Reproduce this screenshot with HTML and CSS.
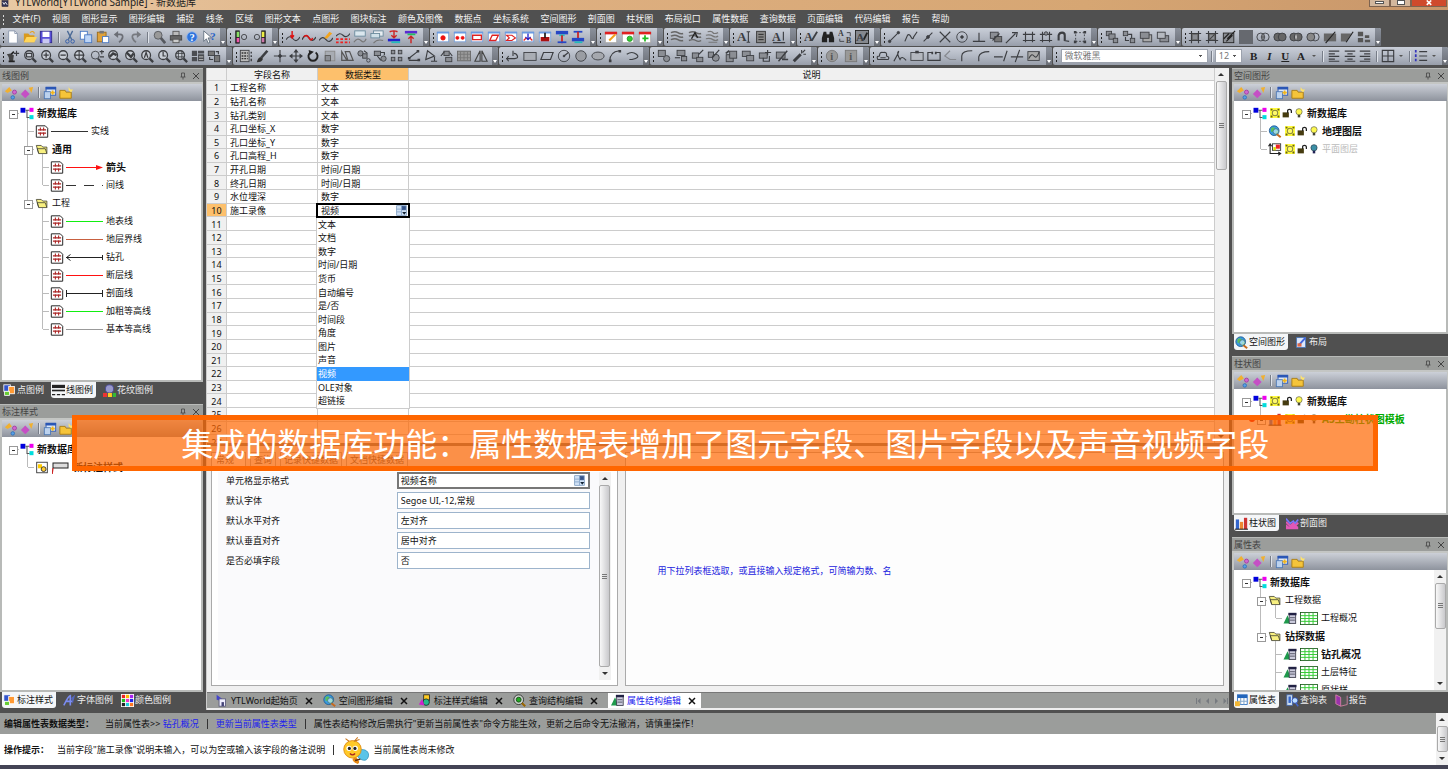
FILE: index.html
```html
<!DOCTYPE html>
<html lang="zh-CN">
<head>
<meta charset="utf-8">
<title>YTLWorld[YTLWorld Sample] - 新数据库</title>
<link rel="stylesheet" href="styles.css">
</head>
<body>
<div class="app">
  <header class="titlebar">
    <span class="app-icon" data-icon="app"></span>
    <h1 class="title">YTLWorld[YTLWorld Sample] - 新数据库</h1>
    <div class="window-buttons">
      <button class="win" aria-label="最小化"><span class="glyph-min"></span></button>
      <button class="win" aria-label="还原"><span class="glyph-max"></span></button>
      <button class="win win-close" aria-label="关闭"><span data-icon="xw"></span></button>
    </div>
  </header>

  <nav class="menubar">
    <span class="grip grip-light"></span>
    <button>文件(F)</button><button>视图</button><button>图形显示</button><button>图形编辑</button><button>捕捉</button><button>线条</button><button>区域</button><button>图形文本</button><button>点图形</button><button>图块标注</button><button>颜色及图像</button><button>数据点</button><button>坐标系统</button><button>空间图形</button><button>剖面图</button><button>柱状图</button><button>布局视口</button><button>属性数据</button><button>查询数据</button><button>页面编辑</button><button>代码编辑</button><button>报告</button><button>帮助</button>
  </nav>

  <div class="toolrow toolrow-a">
    <div class="strip" data-tools="new open save | cut copy paste undo redo | find print help what"></div>
    <div class="strip" data-tools="barL barR"></div>
    <div class="strip" data-tools="crvA crvB crvC crvD layA layB layC layD"></div>
    <div class="strip" data-tools="dot1 dot2 rectR skewR arrR boxDn boxIn colA colB"></div>
    <div class="strip" data-tools="calPen calDot calAdd"></div>
    <div class="strip" data-tools="wavA wavB wavC"></div>
    <div class="strip" data-tools="txtI page txtU"></div>
    <div class="strip" data-tools="txtPen binoc abSwap txtBox"></div>
    <div class="strip" data-tools="segA polyA segB cross target perp stampG wand frame frameX magnet marquee"></div>
    <div class="strip" data-tools="ordA ordB ordC ordD"></div>
    <div class="strip" data-tools="hatA hatB hatPen block venA venB venC venD slashA slashB tiles"></div>
  </div>

  <div class="toolrow toolrow-b">
    <div class="strip" data-tools="pan zoomWin zoomIn zoomOut zoomAll zoomPm zoomPrev zoomBk zoomA zoomL zoomG paneA paneB"></div>
    <div class="strip" data-tools="calc brush plus move rotate scale shear copyD copyS array nodes triA triB gridG mirror"></div>
    <div class="strip" data-tools="hook rectG skewG circR circG ellG arcA arcB"></div>
    <div class="strip" data-tools="ordE ordF ordG ordH cutA cutB cutC cutD wandG"></div>
    <div class="strip" data-tools="infoC infoS"></div>
    <div class="strip" data-tools="cloud scrib rectN rectO angA angB corner trimA trimB img"></div>
    <div class="strip strip-format">
      <span class="grip"></span>
      <select class="combo combo-font" aria-label="字体"><option>微软雅黑</option></select>
      <span class="sep"></span>
      <select class="combo combo-size" aria-label="字号"><option>12</option></select>
      <button class="fmt fmt-b" aria-label="加粗">B</button>
      <button class="fmt fmt-i" aria-label="倾斜">I</button>
      <button class="fmt fmt-u" aria-label="下划线">U</button>
      <button class="fmt fmt-a" aria-label="文字颜色">A</button>
      <span class="caret"></span><span class="sep"></span>
      <button class="tool" data-icon="alL" aria-label="左对齐"></button>
      <button class="tool" data-icon="alC" aria-label="居中"></button>
      <button class="tool" data-icon="alR" aria-label="右对齐"></button>
      <span class="sep"></span>
      <button class="tool" data-icon="tbl" aria-label="边框"></button>
      <span class="caret"></span><span class="sep"></span>
      <button class="tool" data-icon="list" aria-label="列表"></button>
      <span class="caret"></span>
      <span class="endcap"></span>
    </div>
  </div>

  <main class="workspace">
    <aside class="dock dock-left">
      <section class="panel">
        <h2 class="panel-head"><span>线图例</span><span data-icon="pin"></span><button aria-label="关闭" data-icon="x"></button></h2>
        <div class="panel-tools"></div>
        <div class="panel-body">
          <ul class="tree">
            <li><div class="row open"><i data-icon="db"></i><b>新数据库</b></div>
              <ul>
                <li><div class="row"><i data-icon="hash"></i><i class="line" data-line="solid"></i>实线</div></li>
                <li><div class="row open"><i data-icon="folder"></i><b>通用</b></div>
                  <ul>
                    <li><div class="row"><i data-icon="hash"></i><i class="line" data-line="arrow"></i><b>箭头</b></div></li>
                    <li><div class="row"><i data-icon="hash"></i><i class="line" data-line="dash"></i>间线</div></li>
                  </ul></li>
                <li><div class="row open"><i data-icon="folder"></i>工程</div>
                  <ul>
                    <li><div class="row"><i data-icon="hash"></i><i class="line" data-line="green"></i>地表线</div></li>
                    <li><div class="row"><i data-icon="hash"></i><i class="line" data-line="brown"></i>地层界线</div></li>
                    <li><div class="row"><i data-icon="hash"></i><i class="line" data-line="drill"></i>钻孔</div></li>
                    <li><div class="row"><i data-icon="hash"></i><i class="line" data-line="red"></i>断层线</div></li>
                    <li><div class="row"><i data-icon="hash"></i><i class="line" data-line="section"></i>剖面线</div></li>
                    <li><div class="row"><i data-icon="hash"></i><i class="line" data-line="green"></i>加粗等高线</div></li>
                    <li><div class="row"><i data-icon="hash"></i><i class="line" data-line="gray"></i>基本等高线</div></li>
                  </ul></li>
              </ul></li>
          </ul>
        </div>
        <div class="panel-tabs">
          <button><i data-icon="tPoint"></i>点图例</button>
          <button class="on"><i data-icon="tLine"></i>线图例</button>
          <button><i data-icon="tFill"></i>花纹图例</button>
        </div>
      </section>
      <section class="panel">
        <h2 class="panel-head"><span>标注样式</span><span data-icon="pin"></span><button aria-label="关闭" data-icon="x"></button></h2>
        <div class="panel-tools"></div>
        <div class="panel-body">
          <ul class="tree">
            <li><div class="row open"><i data-icon="db"></i><b>新数据库</b></div>
              <ul><li><div class="row"><i data-icon="style"></i><i class="wide" data-icon="callout"></i><b>新标注样式</b></div></li></ul></li>
          </ul>
        </div>
        <div class="panel-tabs">
          <button class="on"><i data-icon="tPoint"></i>标注样式</button>
          <button><i data-icon="tFont"></i>字体图例</button>
          <button><i data-icon="tColor"></i>颜色图例</button>
        </div>
      </section>
    </aside>

    <section class="center">
      <div class="sheet">
        <div class="sheet-view">
          <table class="grid">
            <thead><tr><th class="c-num"></th><th class="c-name">字段名称</th><th class="c-type hot">数据类型</th><th>说明</th></tr></thead>
            <tbody>
              <tr><th>1</th><td>工程名称</td><td>文本</td><td></td></tr>
              <tr><th>2</th><td>钻孔名称</td><td>文本</td><td></td></tr>
              <tr><th>3</th><td>钻孔类别</td><td>文本</td><td></td></tr>
              <tr><th>4</th><td>孔口坐标_X</td><td>数字</td><td></td></tr>
              <tr><th>5</th><td>孔口坐标_Y</td><td>数字</td><td></td></tr>
              <tr><th>6</th><td>孔口高程_H</td><td>数字</td><td></td></tr>
              <tr><th>7</th><td>开孔日期</td><td>时间/日期</td><td></td></tr>
              <tr><th>8</th><td>终孔日期</td><td>时间/日期</td><td></td></tr>
              <tr><th>9</th><td>水位埋深</td><td>数字</td><td></td></tr>
              <tr><th class="hot">10</th><td>施工录像</td><td class="editing">
                <div class="editor"><input value="视频" aria-label="数据类型"><button aria-label="展开" data-icon="pick"></button></div>
                <ul class="options" role="listbox">
                  <li role="option">文本</li><li role="option">文档</li><li role="option">数字</li><li role="option">时间/日期</li><li role="option">货币</li><li role="option">自动编号</li><li role="option">是/否</li><li role="option">时间段</li><li role="option">角度</li><li role="option">图片</li><li role="option">声音</li><li role="option" aria-selected="true" class="sel">视频</li><li role="option">OLE对象</li><li role="option">超链接</li>
                </ul></td><td></td></tr>
              <tr><th>11</th><td></td><td></td><td></td></tr>
              <tr><th>12</th><td></td><td></td><td></td></tr>
              <tr><th>13</th><td></td><td></td><td></td></tr>
              <tr><th>14</th><td></td><td></td><td></td></tr>
              <tr><th>15</th><td></td><td></td><td></td></tr>
              <tr><th>16</th><td></td><td></td><td></td></tr>
              <tr><th>17</th><td></td><td></td><td></td></tr>
              <tr><th>18</th><td></td><td></td><td></td></tr>
              <tr><th>19</th><td></td><td></td><td></td></tr>
              <tr><th>20</th><td></td><td></td><td></td></tr>
              <tr><th>21</th><td></td><td></td><td></td></tr>
              <tr><th>22</th><td></td><td></td><td></td></tr>
              <tr><th>23</th><td></td><td></td><td></td></tr>
              <tr><th>24</th><td></td><td></td><td></td></tr>
              <tr><th>25</th><td></td><td></td><td></td></tr>
              <tr><th>26</th><td></td><td></td><td></td></tr>
              <tr><th>27</th><td></td><td></td><td></td></tr>
            </tbody>
          </table>
        </div>
        <div class="scroll"><span class="up"></span><span class="thumb thumb-quarter"></span><span class="rest"></span><span class="down"></span></div>
      </div>

      <div class="details">
        <div class="props">
          <div class="prop-tabs"><button class="on">常规</button><button>查询</button><button>记录快捷数据</button><button>文档快捷数据</button></div>
          <div class="prop-page">
            <form class="fields">
              <label for="f1">单元格显示格式</label>
              <span class="pickbox"><select id="f1"><option>视频名称</option></select><span class="pick" data-icon="pick"></span></span>
              <label for="f2">默认字体</label><input id="f2" value="Segoe UI,-12,常规">
              <label for="f3">默认水平对齐</label><input id="f3" value="左对齐">
              <label for="f4">默认垂直对齐</label><input id="f4" value="居中对齐">
              <label for="f5">是否必填字段</label><input id="f5" value="否">
            </form>
            <div class="scroll"><span class="up"></span><span class="thumb thumb-full"></span><span class="down"></span></div>
          </div>
        </div>
        <p class="hint">用下拉列表框选取，或直接输入规定格式，可简输为数、名</p>
      </div>

      <div class="doc-tabs">
        <div class="doc"><i data-icon="home"></i>YTLWorld起始页<button aria-label="关闭" data-icon="xd"></button></div>
        <div class="doc"><i data-icon="globe"></i>空间图形编辑<button aria-label="关闭" data-icon="xd"></button></div>
        <div class="doc"><i data-icon="shapes"></i>标注样式编辑<button aria-label="关闭" data-icon="xd"></button></div>
        <div class="doc"><i data-icon="query"></i>查询结构编辑<button aria-label="关闭" data-icon="xd"></button></div>
        <div class="doc on"><i data-icon="attr"></i>属性结构编辑<button aria-label="关闭" data-icon="xd"></button></div>
        <span class="doc-nav" data-icon="nav"></span>
      </div>
    </section>

    <aside class="dock dock-right">
      <section class="panel">
        <h2 class="panel-head"><span>空间图形</span><span data-icon="pin"></span><button aria-label="关闭" data-icon="x"></button></h2>
        <div class="panel-tools"></div>
        <div class="panel-body">
          <ul class="tree">
            <li><div class="row open"><i data-icon="db"></i><i class="s" data-icon="sun"></i><i class="s" data-icon="lock"></i><i class="s" data-icon="bulb"></i><b>新数据库</b></div>
              <ul>
                <li><div class="row"><i data-icon="globe"></i><i class="s" data-icon="sun"></i><i class="s" data-icon="lock"></i><i class="s" data-icon="bulb"></i><b>地理图层</b></div></li>
                <li><div class="row off"><i data-icon="plane"></i><i class="s" data-icon="sun"></i><i class="s" data-icon="lock"></i><i class="s" data-icon="bulbOff"></i>平面图层</div></li>
              </ul></li>
          </ul>
        </div>
        <div class="panel-tabs">
          <button class="on"><i data-icon="globe"></i>空间图形</button>
          <button><i data-icon="tLayout"></i>布局</button>
        </div>
      </section>
      <section class="panel">
        <h2 class="panel-head"><span>柱状图</span><span data-icon="pin"></span><button aria-label="关闭" data-icon="x"></button></h2>
        <div class="panel-tools"></div>
        <div class="panel-body">
          <ul class="tree">
            <li><div class="row open"><i data-icon="db"></i><i class="s" data-icon="sun"></i><i class="s" data-icon="lock"></i><i class="s" data-icon="bulb"></i><b>新数据库</b></div>
              <ul><li><div class="row open marked"><i data-icon="tBars"></i><i class="s" data-icon="sun"></i><i class="s" data-icon="lock"></i><i class="s" data-icon="bulb"></i><b>A3工勘柱状图模板</b></div></li></ul></li>
          </ul>
        </div>
        <div class="panel-tabs">
          <button class="on"><i data-icon="tBars"></i>柱状图</button>
          <button><i data-icon="tSect"></i>剖面图</button>
        </div>
      </section>
      <section class="panel">
        <h2 class="panel-head"><span>属性表</span><span data-icon="pin"></span><button aria-label="关闭" data-icon="x"></button></h2>
        <div class="panel-tools"></div>
        <div class="panel-body">
          <ul class="tree">
            <li><div class="row open"><i data-icon="db"></i><b>新数据库</b></div>
              <ul>
                <li><div class="row open"><i data-icon="folder"></i>工程数据</div>
                  <ul><li><div class="row"><i data-icon="attr"></i><i class="wide" data-icon="sheet"></i>工程概况</div></li></ul></li>
                <li><div class="row open"><i data-icon="folder"></i><b>钻探数据</b></div>
                  <ul>
                    <li><div class="row"><i data-icon="attr"></i><i class="wide" data-icon="sheet"></i><b>钻孔概况</b></div></li>
                    <li><div class="row"><i data-icon="attr"></i><i class="wide" data-icon="sheet"></i>土层特征</div></li>
                    <li><div class="row"><i data-icon="attr"></i><i class="wide" data-icon="sheet"></i>原状样</div></li>
                    <li><div class="row"><i data-icon="attr"></i><i class="wide" data-icon="sheet"></i></div></li>
                  </ul></li>
              </ul></li>
          </ul>
          <div class="scroll"><span class="up"></span><span class="thumb thumb-half"></span><span class="rest"></span><span class="down"></span></div>
        </div>
        <div class="panel-tabs">
          <button class="on"><i data-icon="tAttr"></i>属性表</button>
          <button><i data-icon="tQuery"></i>查询表</button>
          <button><i data-icon="tBook"></i>报告</button>
        </div>
      </section>
    </aside>

    <p class="banner">集成的数据库功能：属性数据表增加了图元字段、图片字段以及声音视频字段</p>
  </main>

  <footer class="status">
    <div class="status-lines">
      <p class="status-head"><b>编辑属性表数据类型：</b><span>当前属性表&gt;&gt; <a href="#">钻孔概况</a></span><span class="bar"></span><a href="#">更新当前属性表类型</a><span class="bar"></span><span>属性表结构修改后需执行"更新当前属性表"命令方能生效，更新之后命令无法撤消，请慎重操作！</span></p>
      <p class="status-tip"><b>操作提示：</b><span>当前字段"施工录像"说明未输入，可以为空或输入该字段的备注说明</span><span class="bar"></span><span class="bee" data-icon="bee"></span><span>当前属性表尚未修改</span></p>
    </div>
    <div class="scroll"><span class="up"></span><span class="thumb thumb-full"></span><span class="down"></span></div>
  </footer>
</div>
<script src="app.js"></script>
</body>
</html>
```

FILE: styles.css
```css
* { box-sizing: border-box; }
body { margin: 0; font: 9px/12px "Noto Sans", "Noto Sans CJK SC", sans-serif; color: #111; background: #505050; }
h1, h2, p, ul { margin: 0; padding: 0; font: inherit; }
ul { list-style: none; }
button, input, select { font: inherit; color: inherit; border: 0; padding: 0; margin: 0; background: none; border-radius: 0; appearance: none; min-width: 0; }
svg { display: block; width: 100%; height: 100%; }
b { font-weight: 700; }
a { color: #22e; text-decoration: none; }
.app { height: 100vh; display: flex; flex-direction: column; overflow: hidden; }

.titlebar { height: 10px; flex: none; display: flex; overflow: hidden; background: linear-gradient(90deg, #e8c9a4, #dfb183 30%, #d6a673 75%, #c8966a); }
.app-icon { width: 10px; height: 7px; margin-right: 5px; }
.title { flex: 1; line-height: 4px; font-size: 10px; white-space: nowrap; color: #222; }
.window-buttons { display: flex; height: 7px; margin-right: 1px; }
.win { width: 21px; height: 7px; border: 1px solid #7d6350; border-top: 0; background: #d3b79d; display: flex; justify-content: center; }
.win-close { width: 36px; background: #cf4a2c; }
.win-close span { width: 10px; height: 6px; }
.glyph-min { width: 9px; height: 3px; margin-top: 1px; background: #fff; border: 1px solid #555; }
.glyph-max { width: 8px; height: 5px; border: 1px solid #555; background: #fff; }

.menubar { height: 18px; flex: none; width: 66%; padding: 0 6px 0 2px; display: flex; align-items: center; justify-content: space-between; color: #f4f4f4; white-space: nowrap; }
.grip { width: 3px; height: 11px; flex: none; background: radial-gradient(circle, #222 1px, transparent 1px) 0 0 / 3px 4px; }
.grip-light { margin-right: -4px; background: radial-gradient(circle, #ddd 1px, transparent 1px) 0 0 / 3px 4px; }

.toolrow { display: grid; height: 19px; flex: none; gap: 1px; }
.toolrow-a { grid-template-columns: 227fr 51fr 150fr 167fr 66fr 66fr 66fr 83fr 217fr 83fr 200fr 66fr; }
.toolrow-b { grid-template-columns: 232fr 266fr 150fr 167fr 51fr 182fr 396fr; }
.strip { display: flex; align-items: center; height: 18px; min-width: 0; padding-left: 2px; border-radius: 2px; background: linear-gradient(#c9ced8, #b3b9c4 50%, #989eaa); }
.tool { flex: 1 1 0; height: 16px; display: flex; align-items: center; justify-content: center; }
.tool svg { width: 14px; height: 14px; }
.sep { width: 1px; height: 11px; margin: 0 3px; flex: none; background: #777d88; box-shadow: 1px 0 #dfe3ea; }
.endcap { width: 6px; align-self: stretch; flex: none; margin-left: 3px; border-radius: 0 2px 2px 0; background: linear-gradient(#8b919c, #6a6e76); display: flex; align-items: flex-end; justify-content: center; }
.endcap::after { content: ""; margin-bottom: 2px; border: 2px solid transparent; border-top: 3px solid #fff; border-bottom: 0; }
.combo { height: 14px; border: 1px solid #9ca2ad; padding: 0 3px; color: #777; line-height: 12px; background: linear-gradient(#555, #555) right 5px top 5px / 3px 1px no-repeat, linear-gradient(#555, #555) right 6px top 6px / 1px 1px no-repeat, #fff; }
.combo-font { flex: 141 1 0; margin-left: 3px; }
.combo-size { width: 27px; }
.fmt { flex: 16 1 0; font: 700 11px/14px "Liberation Serif", serif; color: #222; }
.combo-size + .fmt { margin-left: 4px; }
.fmt-i { font-style: italic; }
.fmt-u { text-decoration: underline; }
.strip-format .tool { flex: 16 1 0; }
.caret { border: 2px solid transparent; border-top: 2px solid #555; border-bottom: 0; margin: 0 3px; }

.workspace { position: relative; flex: 1; min-height: 0; padding-top: 2px; display: grid; grid-template-columns: 203px minmax(0, 1fr) 216px; gap: 3px; }
.dock { display: grid; min-height: 0; }
.dock-left { grid-template-rows: minmax(0, 336fr) minmax(0, 306fr); }
.dock-right { grid-template-rows: minmax(0, 288fr) minmax(0, 181fr) minmax(0, 173fr); }
.panel { display: flex; flex-direction: column; min-height: 0; }
.panel-head { height: 14px; flex: none; display: flex; align-items: center; gap: 5px; padding: 0 3px 0 2px; background: #9b9d9b; color: #444; border-top: 1px solid #b9bbb9; }
.panel-head > :first-child { flex: 1; }
.panel-head [data-icon] { width: 8px; height: 8px; }
.panel-tools { height: 19px; flex: none; border: 1px solid #c4c6c4; border-width: 2px 1px 0 2px; display: flex; align-items: center; padding: 0 2px 0 1px; background: linear-gradient(#ccd0d8, #8e939d); }
.panel-tools .tool { flex: none; width: 16px; }
.panel-body { flex: 1; min-height: 0; display: flex; overflow: hidden; background: #fff; border: solid #b8bab8; border-width: 0 2px 2px; padding-top: 3px; }
.tree { flex: 1; }
.dock-right .tree { padding-left: 1px; }
.tree ul { margin-left: 15px; }
.tree li { position: relative; white-space: nowrap; }
.tree ul > li::before { content: ""; position: absolute; left: 10px; top: -4px; bottom: 0; border-left: 1px solid #bbb; }
.tree ul > li:last-child::before { bottom: auto; height: 13px; }
.row { position: relative; height: 18px; display: flex; align-items: center; gap: 3px; padding-left: 18px; }
.row::before { content: ""; position: absolute; left: 11px; top: 9px; width: 6px; border-top: 1px solid #bbb; }
.row.open::after { content: ""; position: absolute; left: 7px; top: 6px; width: 7px; height: 7px; border: 1px solid #999; background: linear-gradient(#333, #333) center / 3px 1px no-repeat, #fff; }
.row b { font-size: 10px; }
.row i { width: 14px; height: 13px; flex: none; }
.row i.s { width: 10px; height: 10px; }
.row i.line { width: 37px; margin-left: -1px; }
.row i.wide { width: 18px; }
.row i.s + i.s { margin-left: -1px; }
.row.off { color: #bbb; }
.marked b { color: #0a0; }
.marked i:first-child::before { content: ""; position: absolute; left: -1px; top: 6px; width: 6px; height: 6px; border-radius: 3px; background: #e00; }
.panel-tabs { height: 22px; flex: none; display: flex; align-items: flex-start; gap: 6px; padding: 0 2px; color: #eee; }
.panel:last-child .panel-tabs { height: 18px; }
.panel-tabs button { display: flex; align-items: center; gap: 1px; height: 16px; padding: 0 1px; white-space: nowrap; }
.panel-tabs i { width: 13px; height: 13px; }
.panel-tabs .on { background: #f4f6f8; color: #111; border-radius: 0 0 3px 3px; padding-right: 3px; }

.center { display: grid; grid-template-rows: minmax(0, 378fr) minmax(0, 246fr) auto; min-height: 0; background: #f0f0f0; border-left: 1px solid #ccc; }
.sheet { min-height: 0; display: flex; border-bottom: 3px solid #777; }
.sheet-view { flex: 1; overflow: hidden; background: #fff; }
.grid { width: 100%; height: 381px; border-collapse: separate; border-spacing: 0; table-layout: fixed; }
.grid th, .grid td { border: 1px solid #ccc; border-width: 0 1px 1px 0; padding: 1px 0 0; font-weight: 400; line-height: 11px; white-space: nowrap; text-align: center; background: #f0f0f0; }
.grid td { text-align: left; padding-left: 3px; background: #fff; }
.grid .c-num { width: 20px; }
.grid .c-name, .grid .c-type { width: 91px; }
.grid .hot { background: #fdc06c; }
.grid .editing { position: relative; padding: 0; }
.editor { position: absolute; left: -2px; right: -2px; top: -1px; height: 15px; border: 2px solid #000; background: #fff; display: flex; align-items: center; }
.editor input { flex: 1; height: 11px; padding-left: 3px; }
.editor button { width: 13px; height: 11px; }
.options { position: absolute; left: -2px; right: -2px; top: 14px; height: 191px; z-index: 1; display: flex; flex-direction: column; background: #fff; border: 1px solid #ccc; border-top: 0; }
.options li { flex: 1; min-height: 0; padding-left: 1px; line-height: 13px; }
.options .sel { background: #3399ff; color: #fff; }

.scroll { width: 12px; flex: none; display: flex; flex-direction: column; align-items: center; background: #f1f1f1; }
.up, .down { width: 100%; height: 13px; flex: none; display: flex; align-items: center; justify-content: center; }
.up::after { content: ""; border: 3px solid transparent; border-bottom: 3px solid #333; border-top: 0; }
.down::after { content: ""; border: 3px solid transparent; border-top: 3px solid #333; border-bottom: 0; }
.thumb { width: 11px; border: 1px solid #aaa; border-radius: 2px; background: repeating-linear-gradient(#777 0 1px, transparent 1px 2px) center / 5px 5px no-repeat, linear-gradient(90deg, #f8f8f8, #c9c9cc); }
.thumb-quarter { flex: 1; }
.thumb-quarter + .rest { flex: 3; }
.thumb-half { flex: 45; }
.thumb-half + .rest { flex: 50; }
.thumb-full { flex: 1; }
.sheet .scroll { margin-right: 2px; }
.panel-body .scroll { margin-top: -3px; }

.details { min-height: 0; display: grid; grid-template-columns: minmax(0, 407fr) minmax(0, 600fr); gap: 7px; padding: 6px 5px 6px 4px; }
.props { display: flex; flex-direction: column; min-height: 0; }
.prop-tabs { display: flex; gap: 4px; height: 14px; color: #555; }
.prop-tabs button { border: 1px solid #aaa; border-bottom: 0; padding: 0 3px; white-space: nowrap; }
.prop-tabs .on { background: #fff; padding: 0 11px 0 4px; }
.prop-page { flex: 1; display: flex; border: 1px solid #aaa; background: #fff; padding: 5px 6px; min-height: 0; }
.fields { flex: 1; display: grid; grid-template-columns: 171fr 193fr; align-content: start; align-items: center; row-gap: 3px; padding: 0 9px 0 8px; background: #fafafc; }
.fields input, .pickbox { height: 17px; border: 1px solid #9db4cc; background: #fff; padding: 0 3px; width: 100%; }
.fields .pickbox { position: relative; border: 2px solid #777; padding: 0 2px; }
.pickbox select { width: 100%; height: 13px; display: block; }
.pick { position: absolute; right: 2px; top: 1px; width: 13px; height: 11px; pointer-events: none; }
.hint { border: 1px solid #aaa; background: #fdfdfd; color: #22d; padding: 112px 32px 0; }

.doc-tabs { display: flex; align-items: center; height: 18px; background: #9b9d9b; border-top: 1px solid #777; border-bottom: 2px solid #eee; padding-left: 8px; }
.doc { display: flex; align-items: center; height: 15px; gap: 3px; padding-right: 8px; white-space: nowrap; }
.doc i { width: 13px; height: 13px; }
.doc button { width: 8px; height: 8px; margin: 0 2px 0 4px; }
.doc.on { background: #fff; color: #22e; padding: 0 3px; }
.doc-nav { width: 34px; height: 8px; margin-left: auto; }

.banner { position: absolute; z-index: 2; left: 5%; right: 70px; top: 349px; height: 56px; border: 5px solid #ff6600; background: rgba(255, 102, 0, .7); color: #fff; font: 32px/44px "KaiTi", "AR PL UKai CN", "Noto Sans CJK SC", serif; text-align: center; white-space: nowrap; }

.status { flex: none; display: flex; border-top: 3px solid #505050; border-bottom: 4px solid #445; background: #fff; }
.status-lines { flex: 1; }
.status-head, .status-tip { display: flex; align-items: center; gap: 8px; padding: 1px 0 0 4px; white-space: nowrap; }
.status-head { height: 21px; background: #9b9d9b; }
.status-head > b { margin-right: 3px; }
.status-tip { height: 31px; }
.bar { width: 1px; height: 10px; background: #333; }
.bee { width: 28px; height: 28px; margin-right: -5px; }
```

FILE: app.js
```javascript
const K = '#3c3e42', G = '#8b8e94';
const ln = (d, c = K, w = 1.3) => `<path d="${d}" fill="none" stroke="${c}" stroke-width="${w}"/>`;
const fl = (d, c = K) => `<path d="${d}" fill="${c}"/>`;
const rc = (x, y, w, h, f = G, s = K) => `<rect x="${x}" y="${y}" width="${w}" height="${h}" fill="${f}" stroke="${s}"/>`;
const ci = (x, y, r, f = 'none', s = K) => `<circle cx="${x}" cy="${y}" r="${r}" fill="${f}" stroke="${s}"/>`;
const tx = (t, x, y, s, c = K) => `<text x="${x}" y="${y}" font-size="${s}" font-family="Liberation Serif" font-weight="700" fill="${c}">${t}</text>`;

const lens = inner => `<circle cx="7" cy="7" r="5" fill="#c9ced6" stroke="${K}" stroke-width="1.5"/>` + ln('M11 11L15 15', K, 2.6) + inner;
const card = inner => rc(1.5, 2.5, 13, 11, '#fff', '#7aa0d8') + fl('M1 2h14v2H1z', '#6a9be0') + inner;
const cal = inner => rc(1.5, 2.5, 13, 12, '#fff', '#aaa') + fl('M1 2h14v3H1z', '#e02020') + inner;
const hat = ln('M4 1V15M12 1V15M1 4H15M1 12H15') + rc(5, 5, 6, 6, G, '#666');

const ICONS = {
  app: rc(1, 1, 14, 14, '#335', '#223') + ln('M3 5L6 10L9 5L13 11', '#fff', 2),
  new: fl('M3 1H10L13 4V15H3z', '#fff') + ln('M10 1V4H13M3 1H10L13 4V15H3z', '#8a97ad', 1),
  open: fl('M1 4H6L8 6H13V14H1z', '#d99a1e') + fl('M4 8H16L13 14H1z', '#ffd65a') + ln('M8 3Q12 0 13 4', '#e9a01a'),
  save: rc(1.5, 1.5, 13, 13, '#5a50d8', '#2f288f') + fl('M4 2h8v6H4z', '#fff') + fl('M4 10h8v5H4z', '#c9c9f2'),
  cut: ln('M5 1L10 11M11 1L6 11', '#4b6a96', 1.5) + ci(5, 13, 2, 'none', '#2a57a8') + ci(11, 13, 2, 'none', '#2a57a8'),
  copy: rc(1.5, 1.5, 8, 9, '#fff', '#4677c4') + rc(6.5, 5.5, 8, 9, '#bcd4f6', '#4677c4'),
  paste: rc(1.5, 2.5, 10, 11, '#e0a23a', '#9a6a1a') + fl('M4 1h5v3H4z', '#777') + rc(7.5, 7.5, 7, 7, '#fff', '#4677c4'),
  undo: ln('M5 5H9Q13 5 12 9Q11 12 8 14', '#6b6e75', 2) + fl('M7 1V9L2 5z', '#6b6e75'),
  redo: ln('M11 5H7Q3 5 4 9Q5 12 8 14', '#777a80', 2) + fl('M9 1V9L14 5z', '#777a80'),
  find: ci(7, 6, 4.5, '#999', '#55585e') + ln('M10 9L15 15', '#55585e', 3),
  print: rc(4.5, 1.5, 7, 5, '#bbb', '#555') + rc(1.5, 6.5, 13, 5, '#666', '#444') + rc(4.5, 10.5, 7, 4, '#ccc', '#555'),
  help: ci(8, 8, 6, '#2f74dc', '#8fb4ea') + tx('?', 5, 12, 12, '#fff'),
  what: fl('M2 1V13L5 10L7 15L9 14L7 9H11z', '#fff') + ln('M2 1V13L5 10L7 15L9 14L7 9H11z', '#456', .8) + tx('?', 9, 11, 13, '#2763c8'),
  barL: rc(2, 1, 4, 14, '#222', '#222') + fl('M3 2h3v6H3z', '#8d6') + fl('M3 9h3v5H3z', '#e5a') + ci(11.5, 8, 3),
  barR: ci(4.5, 8, 3) + rc(10, 1, 4, 14, '#222', '#222') + fl('M10 2h3v6h-3z', '#ee4') + fl('M10 9h3v5h-3z', '#c7a'),
  crvA: ln('M0 11Q4 5 8 10T16 8') + ln('M7 1V9M5 6L7 9L9 6', '#d11', 1.6),
  crvB: ln('M0 11Q4 3 8 9T16 8', K, 1.5) + ln('M2 8Q5 4 8 9T12 9', '#d11', 1.8),
  crvC: ln('M0 12Q4 6 8 11T16 9') + fl('M6 9L12 2L15 4L9 10z', '#f3a41c'),
  crvD: ln('M0 7Q4 2 8 6T16 4') + ln('M0 10.5h16M0 14h16', '#e22', 2).replace('/>', ' stroke-dasharray="3 2"/>'),
  layA: rc(2, 1, 12, 6, '#dbe7ee', '#68899b') + ln('M1 14Q5 8 9 12T15 10', '#777'),
  layB: rc(4, 1, 11, 6, '#e9eef2', '#68899b') + rc(1, 4, 10, 5, '#cfe0e8', '#68899b') + ln('M4 15Q8 10 15 12', '#777'),
  layC: ln('M3 2Q8 0 12 2M8 1V8M5 6L8 9L11 6', '#c22', 1.6) + fl('M1 10h14v3H1z', '#22c') + fl('M5 13h10v2H5z', '#2bb'),
  layD: fl('M1 1h14v3H1z', '#5a2bd0') + fl('M4 4h9v2H4z', '#22c060') + ln('M8 15V7M5 10L8 7L11 10', '#c22', 1.6),
  dot1: card(ci(8, 9, 2.5, '#e11', '#e11')),
  dot2: card(ci(5, 9, 1.7, '#e11', '#e11') + ci(11, 9, 1.7, '#e11', '#e11')),
  rectR: card(ln('M3 6h10v5H3z', '#d22', 1.5)),
  skewR: card(ln('M6 6h7l-3 6H3z', '#d22', 1.5)),
  arrR: card(ln('M3 6h6l4 3-4 3H3l3-3z', '#d22', 1.4)),
  boxDn: card(ln('M8 4V10M5 8L8 11L11 8', '#22c', 1.5) + ln('M3 12L6 9M13 12L10 9', '#d22', 1.6)),
  boxIn: card(fl('M3 8h10v5H3z', '#a11') + ln('M8 3V9', '#222', 2)),
  colA: fl('M1 1h14v4H1z', '#2646c4') + fl('M5 5h6v2H5z', '#2bb') + ln('M8 6V15', '#c22', 2) + fl('M3 13h10v2H3z', '#2646c4'),
  colB: fl('M3 1h10v2H3z', '#2646c4') + ln('M8 2V10', '#c22', 2) + fl('M1 9h14v4H1z', '#2646c4') + fl('M4 13h9v2H4z', '#2bb'),
  calPen: cal(ln('M6 12L13 5', '#f0a01c', 2.4)),
  calDot: cal(ci(10, 10, 3, '#3c3', '#292')),
  calAdd: cal(ln('M8 6V13M5 9.5H12', '#2b2', 2)),
  wavA: ln('M1 3Q6 1 9 3T15 4M1 7Q6 5 9 7T15 8M1 11Q6 9 9 11T15 12', '#666', 1.8),
  wavB: ln('M1 3Q6 1 9 3T15 4M1 7Q6 5 9 7T15 8M1 12Q6 10 9 12T15 12', '#666', 1.6) + ln('M4 10L8 3L11 9', '#222', 1.6),
  wavC: ln('M3 2Q8 1 9 3T15 3M1 6Q6 5 9 7T15 7M1 10Q6 9 9 11T15 11M4 14H14', '#777', 1.4),
  txtI: tx('A', 0, 13, 15) + ln('M13 2V14M11 2H15M11 14H15'),
  page: rc(3, 1.5, 10, 13, '#888', '#333') + ln('M5 5h6M5 8h6M5 11h6', '#222', 1),
  txtU: tx('A', 0, 12, 14) + ln('M13 2V12M1 14.5H15'),
  txtPen: tx('A', 0, 13, 14) + ln('M9 12L15 2', K, 2),
  binoc: fl('M3 2H6L7 8V14H1V9zM13 2H10L9 8V14H15V9z', '#222') + fl('M6 5h4v4H6z', '#222'),
  abSwap: tx('A', 0, 7, 9) + tx('B', 9, 15, 9) + ln('M10 3H14V7M2 10V13H7', K, 1),
  txtBox: rc(.5, .5, 15, 15, '#85888e', '#222') + tx('A', 1, 13, 13) + ln('M10 11L14 3', '#222', 2),
  segA: ln('M3 13L13 3') + ci(3, 13, 1.4, K) + ci(13, 3, 1.4, K),
  polyA: ln('M1 13L4 6Q6 4 8 8T11 8L15 2'),
  segB: ln('M3 13L13 3') + ci(8, 8, 1.6, K),
  cross: ln('M2 2L14 14M14 2L2 14'),
  target: ci(8, 8, 6) + ci(8, 8, 1.5, K),
  perp: ln('M1 13H15M8 3V13'),
  stampG: rc(1.5, 2.5, 9, 7) + rc(6.5, 7.5, 8, 6, '#777') + ln('M4 12L12 4'),
  wand: ln('M1 15L12 4M8 3H14L13 8'),
  frame: ln('M4 2V14M12 2V14M1 5H15M1 12H15'),
  frameX: ln('M4 2V14M12 2V14M1 5H15M1 12H15') + ci(8, 4, 2, G),
  magnet: ln('M3 12V6Q4 3 7 3T10 6V12', K, 2.4) + ln('M9 12L15 13'),
  marquee: ln('M3 3H13V13H3z', K, 1).replace('/>', ' stroke-dasharray="2 2"/>') + fl('M1 1h3v3H1zM12 1h3v3h-3zM1 12h3v3H1zM12 12h3v3h-3z'),
  ordA: rc(1.5, 1.5, 6, 5) + rc(4.5, 4.5, 7, 6) + rc(9.5, 9.5, 5, 5),
  ordB: rc(1.5, 1.5, 5, 5) + rc(9.5, 9.5, 5, 5) + ln('M7 5H11V9M4 8V12H8'),
  ordC: rc(4.5, 5.5, 10, 8, '#aaa') + rc(1.5, 2.5, 10, 7),
  ordD: rc(4.5, 6.5, 10, 7) + rc(1.5, 2.5, 9, 7, '#b5b9c0'),
  hatA: hat, hatB: hat + ln('M5 11L11 5', '#444'),
  hatPen: rc(1.5, 3.5, 12, 11, G, '#222') + ln('M2 10L8 4M5 13L12 6M6 10L15 1', '#222'),
  block: fl('M0 0H16V16H0z', '#66696f'),
  venA: ci(5.5, 8, 4.5) + ci(10.5, 8, 4.5) + fl('M8 4Q10 8 8 12Q6 8 8 4z', '#555'),
  venB: ci(5.5, 8, 4.5, '#666') + ci(10.5, 8, 4.5, '#666'),
  venC: ci(5.5, 8, 4.5, '#666') + ci(10.5, 8, 4.5, '#666') + fl('M8 4Q10 8 8 12Q6 8 8 4z', '#ccc'),
  venD: ci(10.5, 8, 4.5) + ci(5.5, 8, 4.5, '#888'),
  slashA: fl('M1 4H15V13H1z', '#666') + ln('M3 15L14 2', '#222'),
  slashB: fl('M1 4H13L7 13H1z', '#666') + ln('M7 14L15 2', '#222'),
  tiles: fl('M1 2H7V7H1zM1 9H7V14H1zM9 6H14V9H9zM9 11H15V14H9z', '#555'),
  pan: fl('M3 9L1 6L5 5L9 7L8 14H4z', '#444') + ln('M3 14H10M6 6L9 3', '#222', 2) + ln('M12 2V8M9 5H15'),
  zoomWin: lens(ln('M4 5H10V9H4z', K, 1.4)),
  zoomIn: lens(ln('M7 4V10M4 7H10', K, 1.5)),
  zoomOut: lens(ln('M4 7H10', K, 1.5)),
  zoomAll: lens(ln('M7 1V13M1 7H13', K, 1.2)),
  zoomPm: ci(6, 7, 4.5) + ln('M9 11L13 15', K, 2.4) + ln('M11 3H16M13.5 1V6M11 9H16', K, 1.2),
  zoomPrev: lens(ln('M3 9L7 5L11 7', K, 2.6)),
  zoomBk: lens(ln('M3 4L8 9L11 5', K, 2.8)),
  zoomA: lens(ln('M5 10L7 4L9 10', K, 1.4)),
  zoomL: lens(ln('M7 3V8H10', K, 1.4)),
  zoomG: lens(ln('M5 2V12M9 2V12M2 5H12M2 9H12', K, 1)),
  paneA: fl('M1 2H7V8H1zM8 2H15V5H8zM8 6H15V14H8zM1 9H7V14H1z', '#4b4d52') + ln('M9 9h5M9 12h5', '#aaa'),
  paneB: rc(1.5, 2.5, 7, 5, '#777') + rc(8.5, 7.5, 6, 7, '#777') + ln('M10 3H13V6M3 9V12H7'),
  calc: rc(1.5, 1.5, 10, 13, '#bbb') + ln('M3 4.5H10M3 8H10M3 11H10', '#333', 1.6).replace('/>', ' stroke-dasharray="2 1"/>') + ln('M14 3V5M14 7V9M14 11V14', K, 1.6),
  brush: ln('M6 10L13 2', K, 3) + fl('M1 15Q2 10 5 9L8 11Q7 15 1 15z', '#333'),
  plus: ln('M8 1V15M1 8H15', K, 1.3) + ci(8, 8, 1.6, K),
  move: ln('M8 2V14M2 8H14', K, 1.4) + fl('M8 0L11 4H5zM8 16L11 12H5zM0 8L4 5V11zM16 8L12 5V11z'),
  rotate: ln('M5 4A5.2 5.2 0 1 0 11 4', '#222', 2.2) + fl('M3 1L9 3L4 7z', '#222'),
  scale: rc(2.5, 2.5, 11, 11, '#a8acb3', '#888') + rc(2.5, 7.5, 6, 6, G, '#555'),
  shear: ln('M2 13V3L8 13zM6 3H11L15 13H9z', '#555', 1.4),
  copyD: ci(4, 5, 3, G) + ln('M8 2L12 5') + rc(6.5, 5.5, 5, 5) + ci(13, 13, 2),
  copyS: rc(1.5, 2.5, 7, 5) + ln('M9 4H13V7M5 8L9 13') + ci(12, 11, 3, G),
  array: rc(1.5, 1.5, 4, 4) + rc(9.5, 1.5, 4, 4) + rc(1.5, 9.5, 4, 4) + rc(9.5, 9.5, 4, 4),
  nodes: ln('M3 10L12 3M2 13H14') + fl('M1 9h3v3H1zM11 1h3v3h-3zM12 11h3v3h-3z'),
  triA: ln('M4 2L12 8L2 12zM8 14H15M12 9V14'),
  triB: rc(4.5, 2.5, 6, 5) + ln('M1 8L5 3M14 8L11 4') + rc(6.5, 9.5, 7, 5),
  gridG: rc(.5, 2.5, 15, 11, '#999', '#666') + ln('M4 3V13M8 3V13M12 3V13M1 6H15M1 10H15', '#777', 1),
  mirror: ln('M7 2V14H1zM9 2V14H15z', '#444', 1.3),
  hook: ln('M0 11H10Q14 11 13 8T9 5M3 8L1 11L3 14M8 2V8'),
  rectG: rc(1, 4, 14, 9, '#a9adb4'), skewG: ln('M4 4H15L12 12H1z'),
  circR: ci(8, 8, 6.5) + ln('M8 8L13 4') + ci(8, 8, 1, K), circG: ci(8, 8, 6, '#9a9da3'),
  ellG: '<ellipse cx="8" cy="8" rx="7" ry="4.5" fill="#a5a8ae" stroke="#3c3e42"/>',
  arcA: ln('M2 14Q2 3 13 2') + fl('M1 12h3v3H1zM12 1h3v3h-3z'), arcB: ln('M2 6Q8 2 13 6T8 12H5'),
  ordE: rc(1.5, 1.5, 8, 7) + ci(11, 11, 3.5, G), ordF: rc(3.5, 1.5, 9, 6) + rc(8.5, 8.5, 6, 5) + ln('M1 10H7'),
  ordG: rc(1.5, 4.5, 7, 6) + rc(6.5, 9.5, 7, 5) + ln('M9 6L14 1'), ordH: rc(1.5, 3.5, 6, 6) + ci(10, 10, 4, G) + ln('M6 10L14 1'),
  cutA: rc(2.5, 6.5, 8, 8) + rc(6.5, 2.5, 8, 8) + ln('M2 5L6 2', K, 2), cutB: rc(1.5, 2.5, 9, 6) + rc(6.5, 7.5, 8, 6),
  cutC: rc(1.5, 4.5, 9, 6) + ln('M6 10V14H13V8M11 1V7M8 4H15'), cutD: rc(1.5, 3.5, 10, 7) + ln('M4 14L14 2M8 12H15', K, 1.6),
  wandG: ln('M2 14L10 6', K, 3.4) + ln('M11 1V5M13 6H16M12 4L15 1'),
  infoC: ci(8, 8, 6.5, '#999', '#777') + tx('i', 6, 12, 12, '#555'), infoS: rc(1.5, 1.5, 13, 13, '#999', '#777') + tx('i', 6, 12, 12, '#555'),
  cloud: ln('M2 12Q0 8 4 8Q4 3 8 4Q13 3 12 8Q16 9 14 12zM5 10H11'), scrib: ln('M1 14Q8 1 6 3T8 12Q10 7 15 13'),
  rectN: rc(1, 4, 14, 9, '#b4b8bf') + fl('M6 2h4v3H6z'), rectO: ln('M6 4H1V13H15V4H10') + fl('M5 3h2v3H5zM9 3h2v3H9z'),
  angA: ln('M8 2L2 8L8 12H15', '#85888e'), angB: ln('M2 14V8Q2 2 14 2'), corner: ln('M2 14V9Q3 3 14 3'),
  trimA: ln('M0 9H10M15 2L11 14'), trimB: ln('M1 9H15M11 1L6 15'), img: rc(1, 3, 13, 10, '#aaa') + ln('M2 11Q5 4 8 8T14 3'),
  alL: ln('M2 2.5H14M2 5.5H9M2 8.5H14M2 11.5H9M2 14H14'), alC: ln('M2 2.5H14M5 5.5H11M2 8.5H14M5 11.5H11M2 14H14'), alR: ln('M2 2.5H14M7 5.5H14M2 8.5H14M7 11.5H14M2 14H14'),
  tbl: ln('M1.5 1.5H14.5V14.5H1.5zM8 2V14M2 8H14'), list: ln('M6 3H15M6 8H15M6 13H15') + ln('M2 1V15', '#33b', 2).replace('/>', ' stroke-dasharray="3 2"/>'),
  pin: ln('M5 2H11V10M5 2V10M3 10H13M8 10V15', '#444', 1.6), x: ln('M2 2L14 14M14 2L2 14', '#444', 2), xd: ln('M2 2L14 14M14 2L2 14', '#111', 3),
  xw: ln('M2 1L14 13M14 1L2 13', '#fff', 4),
  pA: fl('M1 6L6 1L9 5L4 8z', '#f0b030') + ci(12, 7, 2.3, '#d068d0', '#a040a0') + ci(10, 13, 2, '#58a0e8', '#3070b8'),
  pB: fl('M1 9L6 4L11 9L6 14z', '#c54fc5') + fl('M10 2L15 1L13 8z', '#f0b030'),
  pC: rc(3.5, 1.5, 11, 9, '#dce9fb', '#2a56b5') + fl('M3 1h12v3H3z', '#2a56b5') + rc(1.5, 6.5, 7, 8, '#bcd2ee', '#4d78b5') + ln('M11 5V10M8.5 7.5H13.5', '#f3b61c', 2),
  pD: fl('M1 5H7L8 7H14V14H1z', '#f5c43a') + ln('M1 5H7L8 7H14V14H1z', '#a87a10', 1) + fl('M11 1L13 4L16 4L14 7L11 5z', '#ffe36a'),
  db: fl('M0 1H6V7H0z', '#00d') + fl('M11 1H16V6H11z', '#e0e') + fl('M11 10H16V15H11z', '#0dd') + ln('M6 4H11M8 4V13H11', '#555'),
  hash: fl('M1 1H12L15 4V15H1z', '#fff') + ln('M1 1H12L15 4V15H1z', '#222', 1.2) + ln('M3 6H13M3 10H13M6 3V7M10 3V7M6 9V13M10 9V13', '#a22', 1.3),
  folder: fl('M1 3H7L9 5H14V13H4z', '#f8f080') + ln('M1 3H7L9 5H14V13H4zM4 13L2 7H12L14 13', '#443', 1),
  style: rc(1.5, 1.5, 13, 13, '#fff', '#222') + fl('M3 4h5v5H3z', '#fc0') + ci(10, 10, 3, '#fc3', '#222'),
  callout: rc(1, 2, 15, 5, '#ddd', '#222') + ln('M1 7L0 14', '#c22'),
  sun: fl('M0 0H16V16H0z', '#fffa3c') + ci(8, 8, 4.5, '#fff96a', '#333') + fl('M1 1h3v3H1zM12 1h3v3h-3zM1 12h3v3H1zM12 12h3v3h-3z', '#666014'),
  lock: fl('M1 7H11V15H1z', '#463c10') + ln('M9 8V4Q9 2 12 2T15 5V8', '#222', 2),
  bulb: ci(8, 6, 5, '#fdf850', '#554') + fl('M6 11h4v4H6z', '#443'), bulbOff: ci(8, 6, 5, '#3b8fa5', '#234') + fl('M6 11h4v4H6z', '#225'),
  globe: ci(7, 7, 6, '#3a9be0', '#1b558e') + fl('M3 4Q7 1 8 5Q5 10 3 8zM9 7L12 8L9 12z', '#5bc05b') + ln('M10 11L15 15', '#c66a1e', 2.4) + ci(9, 8, 3.4, '#c8f0f8aa', '#477'),
  plane: rc(5, 1, 10, 8, '#fff', '#222') + fl('M9 2h5v5H9z', '#e22') + fl('M6 5h3v4H6z', '#dd0') + ln('M2 1V13H15M0 4L2 1L4 4M12 11L15 13L12 15', '#222'),
  attr: fl('M0 14L5 4L9 14z', '#1f9a4c') + rc(7, 2, 8, 12, '#ccd', '#334') + fl('M6 1h10v3H6z', '#224') + ln('M8 7h6M8 10h6', '#445', 1),
  sheet: rc(.5, .5, 21, 15, '#fff', '#151') + ln('M6 1V15M11 1V15M16 1V15M1 4.5H21M1 8H21M1 11.5H21', '#3c3', 1.2),
  pick: rc(1, 1, 14, 14, '#cfe0f4', '#6d8fb8') + ln('M1 6H8M1 10H8M8 1V15', '#8aa9cc') + rc(9, 2, 5, 5, '#35548a', '#35548a') + fl('M9 10H15L12 14z', '#123'),
  home: fl('M2 1L9 6V9L2 7z', '#44c') + rc(5, 6, 8, 9, '#eef', '#557') + fl('M8 10h3v5H8z', '#447'),
  shapes: rc(7, 1, 7, 7, '#fc2', '#222') + ci(10, 10, 4, '#2b8', '#222') + fl('M1 13L5 6L8 14z', '#c2c'),
  query: ci(7, 7, 6, '#c8d0c8', '#222') + ci(7, 7, 3, '#2a2', '#141') + ln('M11 11L15 15', '#960', 2.5),
  nav: fl('M0 2h2v12H0zM9 2V14L3 8zM26 2V14L20 8zM38 2V14L44 8zM55 2V14L61 8zM62 2h2v12h-2z', '#777b80'),
  tPoint: rc(1, 1, 8, 8, '#35c', '#fff') + rc(7, 3, 7, 9, '#f93', '#fff') + rc(2, 9, 6, 5, '#6c3', '#fff'),
  tLine: fl('M0 1H16V5H0z', '#222') + ln('M0 8H16', '#222', 2) + ln('M0 13H16', '#222', 1.5).replace('/>', ' stroke-dasharray="4 2"/>'),
  tFill: ci(8, 6, 5, '#99c', '#449') + fl('M0 11h5v5H0z', '#e33') + fl('M6 11h5v5H6z', '#fc2') + fl('M12 11h4v5h-4z', '#3b3'),
  tFont: ln('M1 14Q7 2 9 2V14M4 9H12', '#7a8bf0', 2) + fl('M10 5L15 1L12 12z', '#56b'),
  tColor: fl('M0 0H16V16H0z', '#fff') + fl('M1 1h4v4H1z', '#e22') + fl('M6 1h4v4H6z', '#fb0') + fl('M11 1h4v4h-4z', '#a2e') + fl('M1 6h4v4H1z', '#2b2') + fl('M6 6h4v4H6z', '#e3c') + fl('M11 6h4v4h-4z', '#22e') + fl('M1 11h4v4H1z', '#222') + fl('M6 11h4v4H6z', '#2cd') + fl('M11 11h4v4h-4z', '#f72'),
  tLayout: rc(2, 2, 11, 12, '#dde8fb', '#47b') + ln('M5 11L13 2', '#46d', 2.4) + fl('M3 9h5v4H3z', '#d64'),
  tBars: fl('M1 3h4v12H1z', '#36c') + fl('M6 6h4v9H6z', '#e83') + fl('M11 1h4v14h-4z', '#c33') + ln('M0 15H16', '#222'),
  tSect: fl('M0 9L4 12L9 8L15 12V15H0z', '#e358b8') + ln('M0 2L5 8L9 5L11 8L15 3', '#77f', 2) + ln('M0 6L5 11L9 8L11 11L15 7', '#e358b8', 2.4),
  tAttr: rc(3, 1, 12, 12, '#fff', '#26b') + fl('M3 1h12v4H3z', '#26b') + ln('M7 5V13M11 5V13M3 9H15', '#8ac') + fl('M0 9h6v6H0z', '#f2b632'),
  tQuery: rc(1, 1, 7, 13, '#cde', '#46a') + fl('M3 3h3v8H3z', '#36c') + ci(11, 8, 3.5, '#bdf', '#24a') + ln('M12 11L15 15', '#46c', 2),
  tBook: fl('M1 1L7 4V15L1 12z', '#93a') + fl('M8 4L15 2V13L8 15z', '#555') + ln('M1 1L7 4V15L1 12zM7 15L15 13V2', '#d8a', 1),
  bee: '<path d="M10 8c3-1 6 1 5 4s-4 2-6 0z" fill="#5cc4e8" stroke="#2a8cb8" stroke-width=".4"/><path d="M8 12q3 3 1 4q-3-1-3-3z" fill="#e88a14"/><circle cx="6" cy="7.6" r="5" fill="#ffc928" stroke="#e08a10" stroke-width=".5"/><path d="M4 3L2 1.5M7 3L9 .8M7 3L10 2" stroke="#c8761a" stroke-width=".6" fill="none"/><circle cx="4" cy="7" r="1.5" fill="#fff"/><circle cx="7.6" cy="7" r="1.5" fill="#fff"/><circle cx="4.2" cy="7.1" r=".9" fill="#222"/><circle cx="7.4" cy="7.1" r=".9" fill="#222"/><path d="M4.5 10q1.5 1.5 3 0" stroke="#a22" stroke-width=".7" fill="none"/><path d="M7.5 14l3-.8" stroke="#5a2a10" stroke-width=".8"/>'
};

const LINES = {
  solid: ln('M0 6.5H37', '#333', 1), gray: ln('M0 6.5H37', '#999', 1),
  green: ln('M0 6.5H37', '#1e1', 1), brown: ln('M0 6.5H37', '#c86040', 1), red: ln('M0 6.5H37', '#f11', 1),
  arrow: ln('M0 6.5H34', '#f11', 1) + fl('M30 4L37 6.5L30 9z', '#f11'),
  dash: '<path d="M0 6.5H37" stroke="#333" stroke-dasharray="10 8"/>',
  drill: ln('M0 6.5H37M4.5 3.5L.5 6.5L4.5 9.5M36.5 4V9', '#222', 1),
  section: ln('M0 6.5H37M.5 3V10M36.5 3V10', '#222', 1)
};
const BOXES = { nav: '0 0 64 16', sheet: '0 0 22 16', callout: '0 0 18 13' };

const svg = (body, box = '0 0 16 16') => `<svg viewBox="${box}" aria-hidden="true">${body}</svg>`;
const tools = names => names.split(' ').map(n => n === '|'
  ? '<span class="sep"></span>'
  : `<button class="tool" aria-label="${n}">${svg(ICONS[n])}</button>`).join('');

document.querySelectorAll('[data-tools]').forEach(el => {
  el.innerHTML = '<span class="grip"></span>' + tools(el.dataset.tools) + '<span class="endcap"></span>';
});
document.querySelectorAll('.panel-tools').forEach(el => { el.innerHTML = tools('pA pB | pC pD'); });
document.querySelectorAll('[data-icon]').forEach(el => {
  el.innerHTML = svg(ICONS[el.dataset.icon], BOXES[el.dataset.icon]);
});
document.querySelectorAll('[data-line]').forEach(el => { el.innerHTML = svg(LINES[el.dataset.line], '0 0 37 13'); });
```
